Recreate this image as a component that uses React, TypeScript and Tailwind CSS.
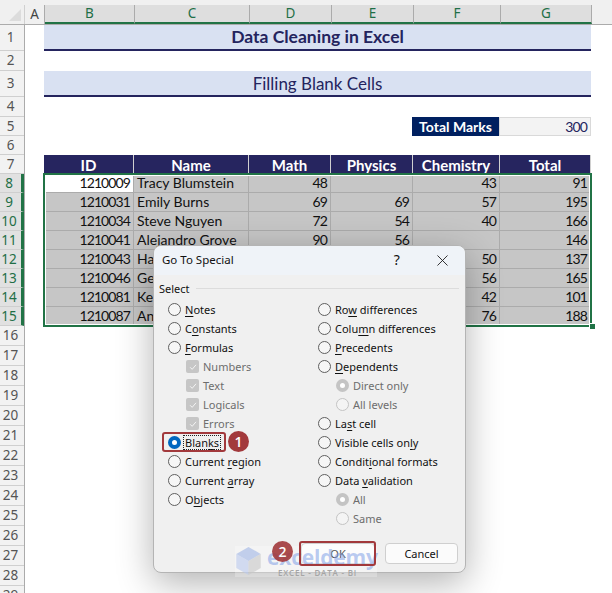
import { ReactNode } from "react";

// ── Data ──────────────────────────────────────────────────────────────────────

const columns = [
  { id: "A", width: "w-[20px]" },
  { id: "B", width: "w-[90px]" },
  { id: "C", width: "w-[115px]" },
  { id: "D", width: "w-[82px]" },
  { id: "E", width: "w-[82px]" },
  { id: "F", width: "w-[87px]" },
  { id: "G", width: "w-[91px]" },
];

const students = [
  ["1210009", "Tracy Blumstein", "48", "", "43", "91"],
  ["1210031", "Emily Burns", "69", "69", "57", "195"],
  ["1210034", "Steve Nguyen", "72", "54", "40", "166"],
  ["1210041", "Alejandro Grove", "90", "56", "", "146"],
  ["1210043", "Ha", "", "", "50", "137"],
  ["1210046", "Ge", "", "", "56", "165"],
  ["1210081", "Ke", "", "", "42", "101"],
  ["1210087", "An", "", "", "76", "188"],
];

const headers = ["ID", "Name", "Math", "Physics", "Chemistry", "Total"];
const widths = ["w-[90px]", "w-[115px]", "w-[82px]", "w-[82px]", "w-[87px]", "w-[91px]"];

const rowHeights: Record<number, string> = {
  1: "h-[26px]",
  2: "h-[20px]",
  3: "h-[26px]",
  4: "h-[20px]",
  5: "h-[19px]",
  6: "h-[19px]",
  7: "h-[19px]",
};

// ── Sheet ─────────────────────────────────────────────────────────────────────

function RowNumbers() {
  const rows = Array.from({ length: 29 }, (_, i) => i + 1);
  return (
    <div className="w-[25px] shrink-0 border-r border-[#ababab] font-['Noto_Sans',sans-serif]">
      {rows.map((n) => {
        const selected = n >= 8 && n <= 15;
        return (
          <div
            key={n}
            className={
              "flex items-center justify-center border-b border-[#cfcfcf] pt-px pr-[3px] text-[13.5px] leading-none " +
              (rowHeights[n] ?? (selected ? "h-[19px]" : "h-[20px]")) +
              (selected
                ? " border-r-[3px] border-r-[#217346] bg-[#e1e1e1] pr-0 text-[#1f6f47]"
                : " bg-[#f2f2f2] text-[#555]")
            }
          >
            {n}
          </div>
        );
      })}
    </div>
  );
}

function BandTitle({ children, bold }: { children: ReactNode; bold?: boolean }) {
  return (
    <div
      className={
        "flex h-[26px] w-[547px] items-center justify-center border-b-[2px] border-[#24245e] bg-[#d9e1f2] pt-px text-[#24245e] " +
        (bold ? "text-[17.5px] font-bold" : "text-[17px]")
      }
    >
      {children}
    </div>
  );
}

function DataRow({ row, first }: { row: string[]; first: boolean }) {
  return (
    <div className="flex h-[19px]">
      {row.map((value, i) => (
        <div
          key={i}
          className={
            "flex items-center border-r border-b border-[#ababab] px-[3px] leading-none text-[#111] " +
            widths[i] +
            (i === 1 ? " justify-start text-[14px]" : " justify-end text-[14px] tracking-[-0.9px]") +
            (first && i === 0 ? " bg-white" : " bg-[#c6c6c6]")
          }
        >
          {value}
        </div>
      ))}
    </div>
  );
}

function Sheet() {
  return (
    <div className="font-['Lato',sans-serif]">
      <div className="h-[5px] bg-[#f0f0f0]" />
      {/* column letters */}
      <div className="flex h-[20px] border-b border-[#ababab] bg-[#f0f0f0] font-['Noto_Sans',sans-serif] text-[13.5px] leading-none">
        <div className="relative w-[25px] shrink-0 border-r border-[#d0d0d0]">
          <div className="absolute bottom-[3px] right-[3px] h-0 w-0 border-b-[12px] border-l-[12px] border-b-[#dcdcdc] border-l-transparent" />
        </div>
        {columns.map((c) => (
          <div
            key={c.id}
            className={
              "flex items-center justify-center border-r border-[#ababab] " +
              c.width +
              (c.id === "A"
                ? " text-[#444]"
                : " border-b-[2px] border-b-[#217346] bg-[#dedede] text-[#1f6f47]")
            }
          >
            {c.id}
          </div>
        ))}
      </div>

      <div className="flex">
        <RowNumbers />
        <div className="ml-[19px] min-w-0 flex-1 bg-white">
          <BandTitle bold>Data Cleaning in Excel</BandTitle>
          <div className="h-[20px]" />
          <BandTitle>Filling Blank Cells</BandTitle>
          <div className="h-[20px]" />

          <div className="flex h-[19px] leading-none">
            <div className="w-[368px]" />
            <div className="flex w-[87px] items-center justify-center bg-[#002060] text-[14px] font-bold text-white">
              Total Marks
            </div>
            <div className="flex w-[92px] items-center justify-end border border-[#d9d9d9] bg-[#f3f3f3] px-[3px] text-[14px] tracking-[-0.9px] text-[#24245e]">
              300
            </div>
          </div>
          <div className="h-[19px]" />

          <div className="flex h-[19px] text-[15px] leading-none">
            {headers.map((h, i) => (
              <div
                key={h}
                className={
                  "flex items-center justify-center overflow-hidden border-r border-[#d0d0d0] bg-[#26255f] pt-[1px] font-bold text-white " +
                  widths[i]
                }
              >
                {h}
              </div>
            ))}
          </div>

          <div className="relative w-[547px]">
            {students.map((row, i) => (
              <DataRow key={row[0]} row={row} first={i === 0} />
            ))}
            {/* selection frame */}
            <div className="pointer-events-none absolute -inset-x-[1px] -top-[1px] -bottom-[1px] border-[2px] border-[#217346] shadow-[inset_0_0_0_1px_#fff]" />
            <div className="absolute -bottom-[3px] -right-[4px] h-[5px] w-[5px] bg-[#217346] outline outline-1 outline-white" />
          </div>
        </div>
      </div>
    </div>
  );
}

// ── Dialog ────────────────────────────────────────────────────────────────────

function Label({ text, u }: { text: string; u: number }) {
  return (
    <span>
      {text.slice(0, u)}
      <span className="underline underline-offset-2">{text[u]}</span>
      {text.slice(u + 1)}
    </span>
  );
}

function Radio({ text, u, checked }: { text: string; u: number; checked?: boolean }) {
  return (
    <div className="flex h-[19px] items-center gap-[4px]">
      <span
        className={
          "h-[13px] w-[13px] shrink-0 rounded-full border " +
          (checked ? "border-[4px] border-[#0067c0] bg-white" : "border-[#5f5f5f] bg-[#f6f6f6]")
        }
      />
      <Label text={text} u={u} />
    </div>
  );
}

function SubRadio({ text, checked }: { text: string; checked?: boolean }) {
  return (
    <div className="flex h-[19px] items-center gap-[4px] pl-[18px] text-[#6d6d6d]">
      <span
        className={
          "h-[13px] w-[13px] shrink-0 rounded-full " +
          (checked ? "border-[4px] border-[#c4c4c4] bg-white" : "border border-[#c4c4c4] bg-[#f4f4f4]")
        }
      />
      <span>{text}</span>
    </div>
  );
}

function SubCheck({ text }: { text: string }) {
  return (
    <div className="flex h-[19px] items-center gap-[4px] pl-[18px] text-[#6d6d6d]">
      <span className="flex h-[13px] w-[13px] shrink-0 items-center justify-center rounded-[2px] bg-[#c6c6c6]">
        <svg viewBox="0 0 12 12" className="h-[10px] w-[10px]" fill="none" stroke="#f4f4f4" strokeWidth="1.2">
          <path d="M2.5 6.3 5 8.8 9.6 3.4" />
        </svg>
      </span>
      <span>{text}</span>
    </div>
  );
}

function Callout({ n, className }: { n: number; className: string }) {
  return (
    <div
      className={
        "absolute flex items-center justify-center rounded-full bg-[#a2393c] font-['Open_Sans',sans-serif] text-[14px] font-semibold text-white " +
        className
      }
    >
      {n}
    </div>
  );
}

function Dialog() {
  return (
    <div className="absolute left-[153px] top-[245px] h-[328px] w-[313px] rounded-[8px] border border-[#b4b4b4] bg-[#f0f0f0] font-['Noto_Sans',sans-serif] text-[11px] leading-none text-[#111] shadow-[0_10px_36px_rgba(0,0,0,0.3)]">
      {/* title bar */}
      <div className="flex h-[29px] items-center rounded-t-[8px] bg-[#eff3f8] pb-px pl-[8px] text-[11.5px]">
        <span>Go To Special</span>
        <span className="ml-[160px] text-[14px]">?</span>
        <svg viewBox="0 0 12 12" className="ml-[37px] h-[11px] w-[11px]" fill="none" stroke="#222" strokeWidth="1">
          <path d="M.5.5l11 11M11.5.5l-11 11" />
        </svg>
      </div>

      {/* group heading */}
      <div className="mt-[8px] flex items-center gap-[6px] pl-[5px] pr-[6px]">
        <span>Select</span>
        <span className="h-px flex-1 bg-[#dcdcdc]" />
      </div>

      <div className="mt-[6px] flex pl-[14px]">
        <div className="w-[150px]">
          <Radio text="Notes" u={0} />
          <Radio text="Constants" u={1} />
          <Radio text="Formulas" u={0} />
          <SubCheck text="Numbers" />
          <SubCheck text="Text" />
          <SubCheck text="Logicals" />
          <SubCheck text="Errors" />
          <div className="relative">
            <Radio text="Blanks" u={4} checked />
            <span className="absolute left-[15px] top-[2px] h-[15px] w-[38px] border border-dotted border-[#222]" />
          </div>
          <Radio text="Current region" u={8} />
          <Radio text="Current array" u={8} />
          <Radio text="Objects" u={1} />
        </div>
        <div>
          <Radio text="Row differences" u={2} />
          <Radio text="Column differences" u={4} />
          <Radio text="Precedents" u={0} />
          <Radio text="Dependents" u={0} />
          <SubRadio text="Direct only" checked />
          <SubRadio text="All levels" />
          <Radio text="Last cell" u={2} />
          <Radio text="Visible cells only" u={16} />
          <Radio text="Conditional formats" u={6} />
          <Radio text="Data validation" u={5} />
          <SubRadio text="All" checked />
          <SubRadio text="Same" />
        </div>
      </div>

      {/* buttons */}
      <div className="absolute bottom-[8px] right-[7px] flex gap-[10px] text-[11px]">
        <button className="h-[21px] w-[74px] rounded-[4px] border border-[#cfcfcf] bg-[#fbfbfb]">OK</button>
        <button className="h-[21px] w-[73px] rounded-[4px] border border-[#cfcfcf] bg-[#fbfbfb]">Cancel</button>
      </div>
    </div>
  );
}

function Watermark() {
  return (
    <div className="absolute left-[235px] top-[546px] flex h-[31px] w-[142px] items-start bg-white/25 font-['Open_Sans',sans-serif]">
      <svg viewBox="0 0 28 32" className="h-[30px] w-[27px] shrink-0">
        <path d="M14 1 27 8.5 14 16 1 8.5Z" fill="#9eb4e4" opacity=".6" />
        <path d="M1 8.5 14 16v15L1 23.5Z" fill="#b9c8ec" opacity=".6" />
        <path d="M27 8.5 14 16v15l13-7.5Z" fill="#c7c7c7" opacity=".6" />
      </svg>
      <div className="ml-[5px] w-[108px]">
        <div className="text-[21px] font-bold leading-[22px] tracking-[-0.2px] text-[#7f9fe6]/55">exceldemy</div>
        <div className="ml-[11px] mt-px text-[8px] font-semibold leading-none tracking-[0.8px] whitespace-nowrap text-[#a5a5a5]">EXCEL - DATA - BI</div>
      </div>
    </div>
  );
}

// ── Main Component ────────────────────────────────────────────────────────────

export default function App() {
  return (
    <div className="relative h-[593px] w-[612px] overflow-hidden bg-white">
      <Sheet />
      <Dialog />
      <Watermark />

      {/* step markers */}
      <div className="absolute left-[162px] top-[432px] h-[20px] w-[64px] rounded-[3px] border-[2px] border-[#a2393c]" />
      <Callout n={1} className="left-[228px] top-[431px] h-[21px] w-[21px]" />
      <div className="absolute left-[299px] top-[541px] h-[25px] w-[77px] rounded-[3px] border-[2px] border-[#a2393c]" />
      <Callout n={2} className="left-[272px] top-[541px] h-[21px] w-[21px] opacity-90" />
    </div>
  );
}
